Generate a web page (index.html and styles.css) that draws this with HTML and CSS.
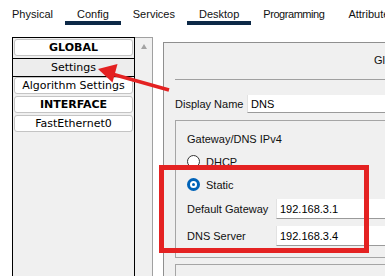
FILE: index.html
```html
<!DOCTYPE html>
<html lang="en">

<head>
    <meta charset="UTF-8">
    <title>DNS - Config</title>
    <link rel="stylesheet" href="styles.css">
</head>

<body>
    <div class="tabs">
        <span class="tab">Physical</span>
        <span class="tab active">Config</span>
        <span class="tab">Services</span>
        <span class="tab active">Desktop</span>
        <span class="tab prog">Programming</span>
        <span class="tab">Attributes</span>
    </div>

    <div class="main">
        <section class="side">
            <div class="list">
                <div class="item head">GLOBAL</div>
                <div class="item selected">Settings</div>
                <div class="item">Algorithm Settings</div>
                <div class="item head">INTERFACE</div>
                <div class="item">FastEthernet0</div>
            </div>
            <div class="scrollbar"><span class="up"></span></div>
        </section>

        <section class="panel">
            <div class="panel-title">Global Settings</div>

            <div class="row">
                <span class="label">Display Name</span>
                <div class="input">DNS</div>
            </div>

            <div class="group">
                <div class="group-title">Gateway/DNS IPv4</div>
                <div class="radio-row">
                    <span class="radio"></span>
                    <span>DHCP</span>
                </div>
                <div class="radio-row">
                    <span class="radio on"></span>
                    <span>Static</span>
                </div>
                <div class="field">
                    <span class="field-label">Default Gateway</span>
                    <div class="input">192.168.3.1</div>
                </div>
                <div class="field second">
                    <span class="field-label">DNS Server</span>
                    <div class="input">192.168.3.4</div>
                </div>
            </div>

            <div class="group next"></div>
        </section>
    </div>

    <!-- annotations drawn over the screenshot -->
    <div class="callout"></div>
    <svg class="arrow" width="385" height="276" viewBox="0 0 385 276">
        <line x1="112" y1="74" x2="169" y2="90" stroke="#e42222" stroke-width="3.5" />
        <polygon points="98,69 117.5,64 112.5,82.5" fill="#e42222" />
    </svg>
</body>

</html>
```

FILE: styles.css
```css
body {
    margin: 0;
    background: #fff;
    font-family: "Liberation Sans", Arial, sans-serif;
    font-size: 11px;
    color: #111;
    overflow: hidden;
    width: 385px;
    height: 276px;
    position: relative;
}

.tabs {
    display: flex;
    white-space: nowrap;
    height: 25px;
}

.tab {
    padding: 8px 12px 0;
    line-height: 13px;
    border-bottom: 4px solid transparent;
}

.tab.active {
    border-bottom-color: #0d2947;
}

.tab.prog {
    letter-spacing: -0.45px;
}

.main {
    display: flex;
    margin-top: 12px;
    padding-left: 12px;
    height: 239px;
}

.side {
    display: flex;
}

.list {
    width: 121px;
    border: 1px solid #000;
    border-bottom: none;
    background: #f0f0f0;
    padding-top: 1px;
    font-family: "DejaVu Sans", Verdana, sans-serif;
    font-size: 11px;
}

.item {
    height: 17px;
    box-sizing: border-box;
    margin: 0 1px 2px;
    border: 1px solid #c4c4c4;
    border-radius: 3px;
    background: #fff;
    text-align: center;
    line-height: 15px;
    color: #000;
}

.item.head {
    font-weight: bold;
}

.item.selected {
    height: 19px;
    margin: 0 -1px;
    border-color: #000;
    border-radius: 0;
    background: #ededed;
    line-height: 17px;
}

.scrollbar {
    width: 17px;
    background: #f0f0f0;
    border-top: 1px solid #a0a0a0;
    border-right: 1px solid #a0a0a0;
    display: flex;
    justify-content: center;
}

.up {
    margin-top: 6px;
    width: 0;
    height: 0;
    border-left: 3.5px solid transparent;
    border-right: 3.5px solid transparent;
    border-bottom: 5px solid #a3a3a3;
}

.panel {
    flex: none;
    width: 320px;
    margin: 5px 0 0 10px;
    border: 1px solid #8f8f8f;
    border-bottom: none;
    background: #f0f0f0;
}

.panel-title {
    margin-left: 11px;
    height: 36px;
    line-height: 34px;
    padding-left: 199px;
    border-bottom: 1px solid #a0a0a0;
    white-space: nowrap;
}

.row {
    display: flex;
    margin: 15px 0 0 11px;
    height: 18px;
    align-items: center;
}

.label {
    width: 72px;
}

.input {
    flex: 1;
    align-self: stretch;
    background: #fff;
    border-left: 1px solid #e2e2e2;
    border-bottom: 1px solid #9a9a9a;
    padding-left: 3px;
    display: flex;
    align-items: center;
    color: #000;
}

.group {
    margin: 7px 0 0 11px;
    border: 1px solid #a5a5a5;
    border-right: none;
    padding: 12px 0 11px 11px;
}

.group-title {
    line-height: 13px;
}

.radio-row {
    display: flex;
    align-items: center;
    gap: 6px;
    height: 23px;
}

.group-title + .radio-row {
    margin-top: 4px;
}

.radio {
    width: 13px;
    height: 13px;
    box-sizing: border-box;
    border: 1px solid #333;
    border-radius: 50%;
    background: #fff;
    position: relative;
}

.radio.on {
    border: 3px solid #0063b8;
}

.radio.on::after {
    content: "";
    position: absolute;
    left: 2px;
    top: 2px;
    width: 3px;
    height: 3px;
    border-radius: 50%;
    background: #0063b8;
}

.field {
    display: flex;
    align-items: center;
    height: 20px;
    margin-top: 3px;
}

.field.second {
    margin-top: 7px;
}

.field-label {
    width: 89px;
}

.group.next {
    margin-top: 6px;
    height: 40px;
    padding: 0;
}

.callout {
    position: absolute;
    left: 159px;
    top: 165px;
    width: 210px;
    height: 88px;
    box-sizing: border-box;
    border: 5px solid #e42222;
}

.arrow {
    position: absolute;
    left: 0;
    top: 0;
    pointer-events: none;
}
```
